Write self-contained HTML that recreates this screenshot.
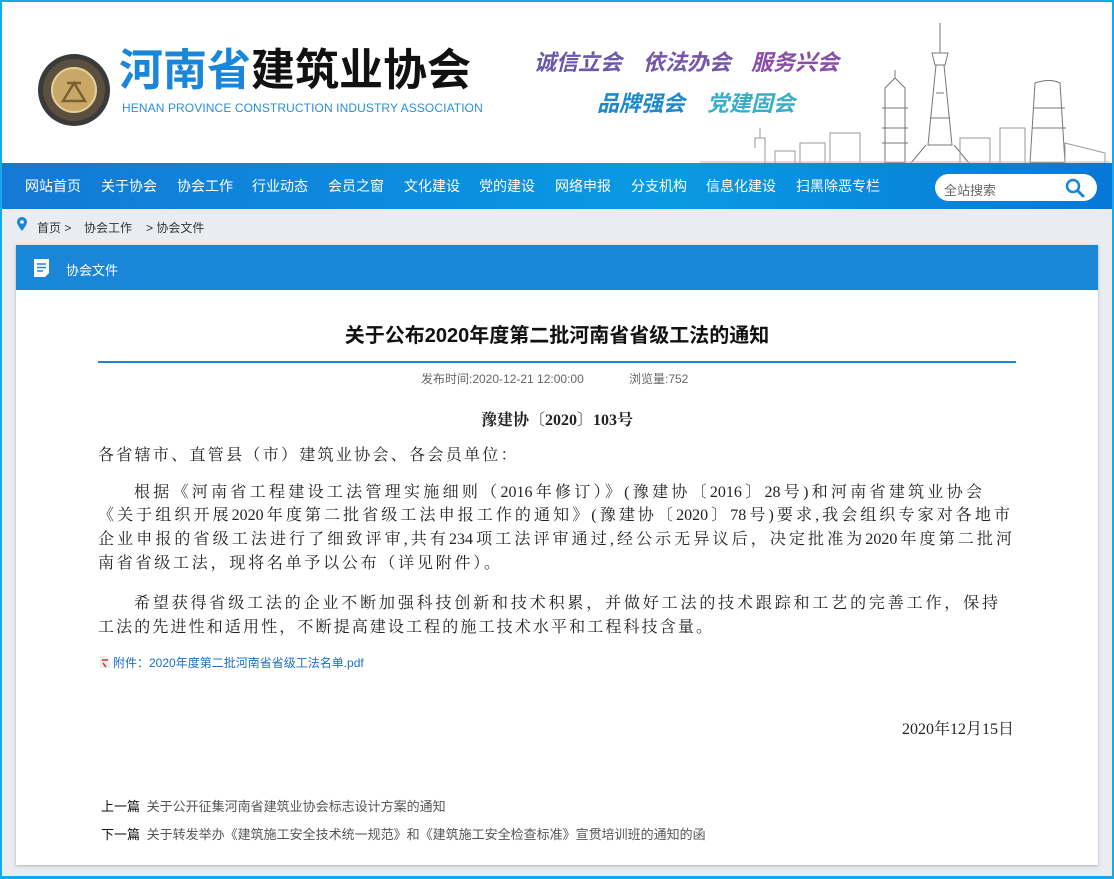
<!DOCTYPE html>
<html><head><meta charset="utf-8"><style>
*{margin:0;padding:0;box-sizing:border-box}
body{width:1114px;height:879px;overflow:hidden;background:#e9edf1;font-family:"Liberation Sans","Noto Sans CJK SC",sans-serif;position:relative}
.frame{position:absolute;inset:0;border:2px solid #16a8e8;border-bottom:3px solid #16a8e8;pointer-events:none;z-index:9}
.hdr{position:absolute;left:0;top:0;width:1114px;height:163px;background:#fff}
.nav{position:absolute;left:0;top:163px;width:1114px;height:46px;background:linear-gradient(90deg,#1479d6,#0b8ee0 40%,#0a9ae2 60%,#0677d8)}
.nav span{position:absolute;top:14px;color:#fff;font-size:14px;line-height:18px}
.search{position:absolute;left:935px;top:174px;width:162px;height:27px;background:#fff;border-radius:14px}
.bc{position:absolute;top:219px;font-size:12px;color:#333}
.panel{position:absolute;left:16px;top:245px;width:1082px;height:620px;background:#fff;box-shadow:0 1px 3px rgba(0,0,0,.25)}
.ph{height:45px;background:#1a86d8;color:#fff;font-size:13px}
.serif{font-family:"Liberation Serif","Noto Serif CJK SC",serif;color:#222;font-size:16px}
.ln{position:absolute;white-space:nowrap;text-align:justify;text-align-last:justify;line-height:22px}
.sl{position:absolute;font-size:22px;font-weight:bold;font-style:italic;line-height:26px}
</style></head><body>
<div class="frame"></div>
<div class="hdr">
 <svg style="position:absolute;left:37px;top:52px" width="74" height="76" viewBox="0 0 74 76">
  <circle cx="37" cy="38" r="36" fill="#3a3a3a"/><circle cx="37" cy="38" r="31" fill="#5b5040"/>
  <circle cx="37" cy="38" r="22" fill="#c9a867"/><circle cx="37" cy="38" r="22" fill="none" stroke="#e4cf98" stroke-width="2"/>
  <path d="M26 49 L37 31 L48 49 Z M30 31 h14" stroke="#7a6030" stroke-width="2.5" fill="none"/>
 </svg>
 <div style="position:absolute;left:119px;top:44px;font-size:44px;font-weight:bold;line-height:54px;white-space:nowrap"><span style="color:#1a86d8">河南省</span><span style="color:#111">建筑业协会</span></div>
 <div style="position:absolute;left:122px;top:101px;font-size:12px;color:#2a8ed8;letter-spacing:0.1px">HENAN PROVINCE CONSTRUCTION INDUSTRY ASSOCIATION</div>
 <div class="sl" style="left:534px;top:50px;color:#6a58a8">诚信立会</div>
 <div class="sl" style="left:643px;top:50px;color:#7556a8">依法办会</div>
 <div class="sl" style="left:751px;top:50px;color:#8a4ea8">服务兴会</div>
 <div class="sl" style="left:597px;top:91px;color:#1e88cc">品牌强会</div>
 <div class="sl" style="left:707px;top:91px;color:#3aaec8">党建固会</div>
 <svg style="position:absolute;left:700px;top:18px" width="410" height="145" viewBox="0 0 410 145" fill="none" stroke="#777" stroke-width="1">
  <path d="M240 5 v30 M232 35 h16 l-3 12 h-10 z M236 47 l-8 80 h24 l-8-80 M226 127 l-15 18 M254 127 l15 18 M230 100 h20 M236 75 h8"/>
  <path d="M185 70 l10-10 10 10 v75 h-20 z M182 90 h26 M182 110 h26 M182 125 h26 M195 60 v-8"/>
  <path d="M335 65 q15-5 25 0 l5 80 h-35 z M333 90 h32 M332 110 h34"/>
  <path d="M55 130 v-10 h10 v25 M60 120 v-10 M100 145 v-20 h25 v20 M130 145 v-30 h30 v30 M260 145 v-25 h30 v25 M300 145 v-35 h25 v35 M365 145 v-20 l40 10 v10 M75 145 v-12 h20 v12" stroke="#999"/>
  <path d="M0 144 h410" stroke="#bbb"/>
 </svg>
</div>
<div class="nav">
 <span style="left:25px">网站首页</span><span style="left:101px">关于协会</span><span style="left:177px">协会工作</span><span style="left:252px">行业动态</span><span style="left:328px">会员之窗</span><span style="left:404px">文化建设</span><span style="left:479px">党的建设</span><span style="left:555px">网络申报</span><span style="left:631px">分支机构</span><span style="left:706px">信息化建设</span><span style="left:796px">扫黑除恶专栏</span>
</div>
<div class="search"><span style="position:absolute;left:9px;top:6px;font-size:13px;color:#666">全站搜索</span>
 <svg style="position:absolute;left:130px;top:4px" width="20" height="20" viewBox="0 0 20 20"><circle cx="8" cy="8" r="6" stroke="#1a86d8" stroke-width="2.5" fill="none"/><path d="M12.5 12.5 L18 18" stroke="#1a86d8" stroke-width="3" stroke-linecap="round"/></svg></div>
<svg style="position:absolute;left:17px;top:217px" width="10" height="14" viewBox="0 0 10 14"><path d="M5 0a5 5 0 0 1 5 5c0 3-5 9-5 9S0 8 0 5a5 5 0 0 1 5-5z" fill="#1a86d8"/><circle cx="5" cy="5" r="1.8" fill="#fff"/></svg>
<div class="bc" style="left:37px">首页 &gt;</div><div class="bc" style="left:84px">协会工作</div><div class="bc" style="left:146px">&gt; 协会文件</div>
<div class="panel">
 <div class="ph"><svg style="position:absolute;left:17px;top:13px" width="17" height="19" viewBox="0 0 17 19"><path d="M1 1h15v14l-4 4H1z" fill="#fff"/><path d="M4 6h9M4 9.5h9M4 13h6" stroke="#1a86d8" stroke-width="1.6"/></svg><span style="position:absolute;left:50px;top:15px">协会文件</span></div>
</div>
<div style="position:absolute;left:0;width:1114px;top:319px;text-align:center;font-size:20px;font-weight:bold;color:#111">关于公布2020年度第二批河南省省级工法的通知</div>
<div style="position:absolute;left:98px;top:361px;width:918px;height:2px;background:#1a86d8"></div>
<div style="position:absolute;left:421px;top:370px;font-size:12px;color:#666">发布时间:2020-12-21 12:00:00</div>
<div style="position:absolute;left:629px;top:370px;font-size:12px;color:#666">浏览量:752</div>
<div class="serif" style="position:absolute;left:0;width:1114px;top:407px;text-align:center;font-weight:bold">豫建协〔2020〕103号</div>
<div class="serif">
 <div class="ln" style="left:98px;top:445px;letter-spacing:2.3px">各省辖市、直管县（市）建筑业协会、各会员单位：</div>
 <div class="ln" style="left:134px;top:482px;width:848px">根据《河南省工程建设工法管理实施细则（2016年修订）》(豫建协〔2016〕28号)和河南省建筑业协会</div>
 <div class="ln" style="left:98px;top:505px;width:912px">《关于组织开展2020年度第二批省级工法申报工作的通知》(豫建协〔2020〕78号)要求,我会组织专家对各地市</div>
 <div class="ln" style="left:98px;top:529px;width:914px">企业申报的省级工法进行了细致评审,共有234项工法评审通过,经公示无异议后，决定批准为2020年度第二批河</div>
 <div class="ln" style="left:98px;top:553px;width:402px">南省省级工法，现将名单予以公布（详见附件）。</div>
 <div class="ln" style="left:134px;top:593px;width:864px">希望获得省级工法的企业不断加强科技创新和技术积累，并做好工法的技术跟踪和工艺的完善工作，保持</div>
 <div class="ln" style="left:98px;top:617px;width:614px">工法的先进性和适用性，不断提高建设工程的施工技术水平和工程科技含量。</div>
 <div class="ln" style="left:814px;width:200px;top:719px;text-align:right;text-align-last:right">2020年12月15日</div>
</div>
<svg style="position:absolute;left:100px;top:656px" width="10" height="12" viewBox="0 0 10 12"><path d="M0 0h7l3 3v9H0z" fill="#eee"/><path d="M2 4h6M3 7l3 4" stroke="#d33" stroke-width="1.5"/></svg>
<div style="position:absolute;left:113px;top:654px;font-size:12px;color:#1a6fc8">附件：2020年度第二批河南省省级工法名单.pdf</div>
<div style="position:absolute;left:101px;top:796px;font-size:13px;color:#111">上一篇 <span style="color:#555;margin-left:3px">关于公开征集河南省建筑业协会标志设计方案的通知</span></div>
<div style="position:absolute;left:101px;top:824px;font-size:13px;color:#111">下一篇 <span style="color:#555;margin-left:3px">关于转发举办《建筑施工安全技术统一规范》和《建筑施工安全检查标准》宣贯培训班的通知的函</span></div>
</body></html>
